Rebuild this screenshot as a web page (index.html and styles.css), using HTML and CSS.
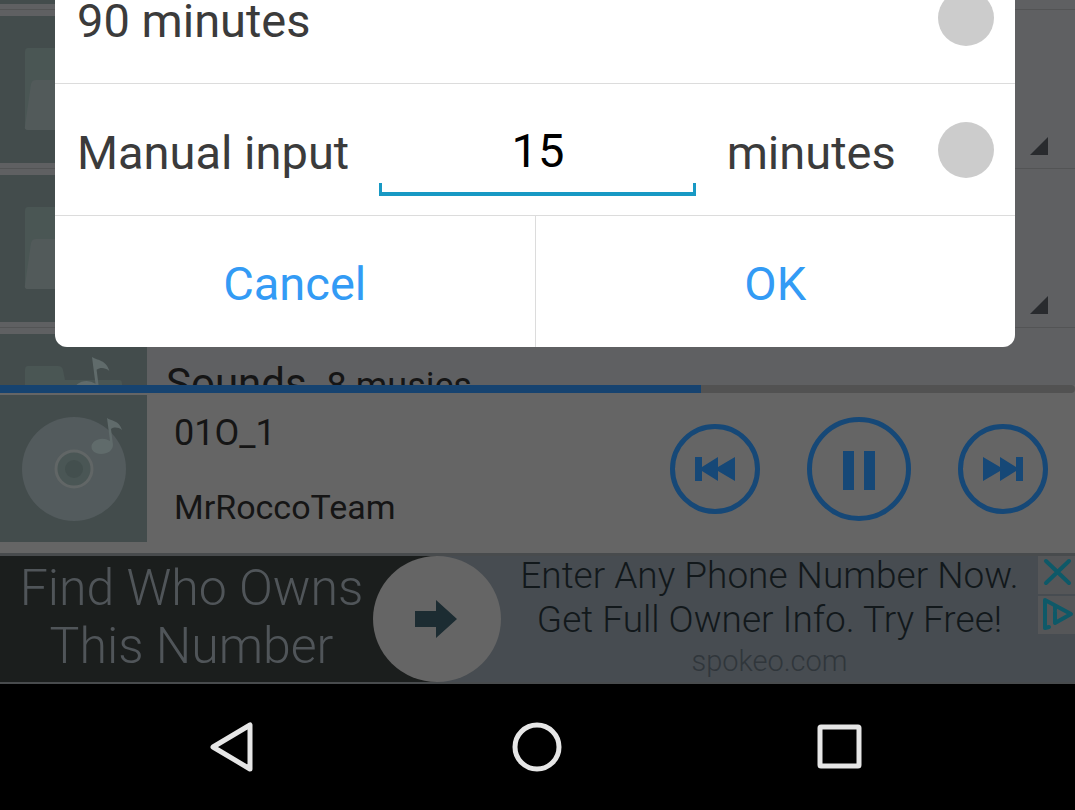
FILE: index.html
```
<!DOCTYPE html>
<html lang="en">
<head>
<meta charset="utf-8">
<meta name="viewport" content="width=device-width, initial-scale=1">
<title>Sleep timer</title>
<link rel="stylesheet" href="styles.css">
</head>
<body>
<svg class="defs" width="0" height="0" aria-hidden="true">
  <symbol id="folder" viewBox="0 0 147 147">
    <path class="folder-back" d="M28 32H58Q62 32 63 36L65 46H119Q122 46 122 50V114H28Q25 114 25 110V36Q25 32 28 32Z"/>
    <path class="folder-front" d="M36 64H126Q129 64 128 68L122 110Q121 114 118 114H28Q24 114 25 110L31 68Q32 64 36 64Z"/>
  </symbol>
  <symbol id="note" viewBox="0 0 32 38">
    <path d="M16 0C20 3 28 2 31 12C27 9 23 9 20 11L22 27C22 32 17 36 10 36C-3 35 -2 23 9 21Q14 20 19 23Z"/>
  </symbol>
</svg>

<main class="screen">
  <section class="library" aria-label="Folders">
    <ul class="rows">
      <li class="row"><svg class="thumb" viewBox="0 0 147 147"><use href="#folder"/></svg></li>
      <li class="row"><svg class="thumb" viewBox="0 0 147 147"><use href="#folder"/></svg><svg class="corner" viewBox="0 0 18 18"><path d="M18 0V18H0Z"/></svg></li>
      <li class="row"><svg class="thumb" viewBox="0 0 147 147"><use href="#folder"/></svg><svg class="corner" viewBox="0 0 18 18"><path d="M18 0V18H0Z"/></svg></li>
      <li class="row">
        <svg class="thumb" viewBox="0 0 147 147"><use href="#folder"/><use class="note" href="#note" x="73" y="23" width="38" height="44"/></svg>
        <div class="folder-label"><span class="folder-name">Sounds</span><span class="folder-count">8 musics</span></div>
      </li>
    </ul>
  </section>

  <section class="player" aria-label="Now playing">
    <div class="progress"><div class="progress-fill" style="width:65.2%"></div></div>
    <div class="player-body">
      <svg class="thumb" viewBox="0 0 147 147">
        <circle class="disc" cx="74" cy="74" r="52"/>
        <circle class="disc-hub" cx="74" cy="74" r="18"/>
        <circle class="disc-hole" cx="74" cy="74" r="9"/>
        <use class="note" href="#note" x="91" y="23" width="32" height="38"/>
      </svg>
      <div class="track"><div class="track-title">01O_1</div><div class="track-artist">MrRoccoTeam</div></div>
      <div class="controls">
        <button class="control" aria-label="Previous"><svg width="90" height="90" viewBox="0 0 90 90"><circle cx="45" cy="45" r="42.5"/><path d="M25 33H32V43L48 33V43L65 33V57L48 47V57L32 47V57H25Z"/></svg></button>
        <button class="control" aria-label="Pause"><svg width="104" height="104" viewBox="0 0 104 104"><circle cx="52" cy="52" r="49.5"/><path d="M36 34H47V73H36ZM57 34H68V73H57Z"/></svg></button>
        <button class="control" aria-label="Next"><svg width="90" height="90" viewBox="0 0 90 90"><circle cx="45" cy="45" r="42.5"/><path d="M65 33H58V43L42 33V43L25 33V57L42 47V57L58 47V57H65Z"/></svg></button>
      </div>
    </div>
  </section>

  <aside class="ad">
    <div class="ad-title">Find Who Owns<br>This Number</div>
    <button class="ad-go" aria-label="Open advertisement"><svg width="44" height="38" viewBox="0 0 44 38"><path d="M0 11H21V0L42 19L21 38V27H0Z"/></svg></button>
    <div class="ad-copy"><p>Enter Any Phone Number Now.<br>Get Full Owner Info. Try Free!</p><a class="ad-link" href="#">spokeo.com</a></div>
    <div class="ad-tools">
      <button class="ad-tool" aria-label="Close advertisement"><svg width="37" height="38" viewBox="0 0 37 38"><path d="M8 5L31 27M31 5L8 27"/></svg></button>
      <button class="ad-tool" aria-label="About this advertisement"><svg width="37" height="38" viewBox="0 0 37 38"><path d="M11 31L7 32V4L33 18L17 27V16M17 11V14"/></svg></button>
    </div>
  </aside>

  <form class="dialog" role="dialog" aria-label="Sleep timer">
    <div class="option">
      <label class="option-label" for="ninety">90 minutes</label>
      <input class="radio" id="ninety" type="radio" name="time">
    </div>
    <div class="option">
      <label class="option-label" for="amount">Manual input</label>
      <div class="field"><input class="amount" id="amount" type="text" inputmode="numeric" value="15"></div>
      <label class="option-label" for="manual">minutes</label>
      <input class="radio" id="manual" type="radio" name="time">
    </div>
    <div class="actions">
      <button class="action" type="button">Cancel</button>
      <button class="action" type="button">OK</button>
    </div>
  </form>
</main>

<nav class="system-nav" aria-label="System">
  <button class="nav-button" aria-label="Back"><svg width="50" height="50" viewBox="0 0 50 50"><path d="M42 3V47L5 25Z"/></svg></button>
  <button class="nav-button" aria-label="Home"><svg width="50" height="50" viewBox="0 0 50 50"><circle cx="25" cy="25" r="22"/></svg></button>
  <button class="nav-button" aria-label="Recent apps"><svg width="50" height="50" viewBox="0 0 50 50"><rect x="5" y="5" width="39" height="39" rx="1"/></svg></button>
</nav>
</body>
</html>
```
FILE: styles.css
```
* { box-sizing: border-box; }
body {
  margin: 0;
  min-height: 100vh;
  display: flex;
  flex-direction: column;
  overflow-x: hidden;
  background: #000;
  font-family: Roboto, "Liberation Sans", sans-serif;
}
button { border: 0; padding: 0; background: none; font: inherit; color: inherit; cursor: pointer; }
svg { display: block; flex: none; }
.defs { position: absolute; }

.screen { position: relative; flex: 1; display: flex; flex-direction: column; background: #656565; }

/* Folder list */
.library { flex: 1 0 0; min-height: 0; overflow: hidden; background: #5f6062; }
.rows { list-style: none; margin: -149px 0 0; padding: 0; }
.row {
  display: flex;
  justify-content: space-between;
  padding: 6px 0 5px;
  border-bottom: 1px solid #535455;
}
.thumb { width: 147px; height: 147px; background: #434c4c; }
.folder-back { fill: #4a5654; }
.folder-front { fill: #525a5a; }
.note { fill: #606b6b; }
.corner { width: 18px; height: 18px; margin: 121px 27px 0 0; fill: #292b2e; }
.folder-label {
  flex: 1;
  display: flex;
  align-items: baseline;
  gap: 20px;
  padding: 26px 0 0 19px;
  color: #151515;
}
.folder-name { font-size: 42px; line-height: 48px; }
.folder-count { font-size: 36px; }

/* Player */
.player { color: #151515; }
.progress { height: 8px; background: #525252; border-radius: 0 4px 4px 0; }
.progress-fill { height: 100%; background: #164370; }
.player-body { display: flex; align-items: center; padding: 2px 27px 10px 0; }
.player .thumb { margin-bottom: 1px; }
.disc { fill: #535b5d; }
.disc-hub { fill: #4a5655; stroke: #616666; stroke-width: 3px; }
.disc-hole { fill: #434f4e; }
.track {
  flex: 1;
  display: flex;
  flex-direction: column;
  gap: 32px;
  padding: 2px 0 0 27px;
  line-height: 42px;
}
.track-title { font-size: 36px; }
.track-artist { font-size: 34px; }
.controls { display: flex; align-items: center; gap: 47px; }
.control circle { fill: none; stroke: #164877; stroke-width: 5px; }
.control path { fill: #164877; }

/* Advertisement */
.ad {
  display: flex;
  border-top: 3px solid #484b4d;
  border-bottom: 2px solid #484b4d;
  background: linear-gradient(90deg, #1b1e1d 437px, #474c51 437px);
}
.ad-title {
  width: 373px;
  padding: 3px 0 7px 10px;
  text-align: center;
  font-size: 50px;
  font-weight: 300;
  line-height: 58px;
  color: #505559;
}
.ad-go {
  flex: none;
  width: 128px;
  height: 126px;
  display: grid;
  place-items: center;
  border-radius: 50%;
  background: #656565;
}
.ad-go path { fill: #1c2c32; }
.ad-copy { flex: 1; margin-top: -2px; text-align: center; font-weight: 300; }
.ad-copy p { margin: 0; font-size: 37px; line-height: 44px; white-space: nowrap; color: #12181b; }
.ad-link { font-size: 29px; line-height: 38px; color: #30363b; text-decoration: none; }
.ad-tools { display: flex; flex-direction: column; align-items: flex-start; gap: 2px; }
.ad-tool { background: #555658; }
.ad-tool path { fill: none; stroke: #0e5968; stroke-width: 4px; stroke-linecap: round; stroke-linejoin: round; }

/* Timer dialog */
.dialog {
  position: absolute;
  top: -48px;
  left: 55px;
  right: 60px;
  overflow: hidden;
  border-radius: 12px;
  background: #fff;
}
.option {
  display: flex;
  align-items: center;
  justify-content: space-between;
  height: 132px;
  padding: 0 21px 0 22px;
  border-bottom: 1px solid #dcdcdc;
}
.option-label { font-size: 47px; line-height: 56px; color: #3b3b3b; white-space: nowrap; padding-top: 6px; }
.radio {
  appearance: none;
  flex: none;
  width: 56px;
  height: 56px;
  margin: 0 0 0 12px;
  border-radius: 50%;
  background: #ccc;
}
.radio:checked { background: #339bf5; }
.field {
  flex: 0 1 317px;
  min-width: 0;
  align-self: flex-end;
  margin-bottom: 19px;
  padding-bottom: 3px;
  background: linear-gradient(#1899c4, #1899c4) left bottom / 3px 9px no-repeat,
    linear-gradient(#1899c4, #1899c4) right bottom / 3px 9px no-repeat;
  border-bottom: 4px solid #1899c4;
}
.amount {
  display: block;
  width: 100%;
  height: 78px;
  border: 0;
  outline: 0;
  padding: 0;
  background: none;
  text-align: center;
  font: 47px Roboto, "Liberation Sans", sans-serif;
  color: #000;
}
.actions { display: flex; height: 131px; }
.action { flex: 1; padding-top: 4px; font-size: 47px; color: #339bf5; }
.action + .action { border-left: 1px solid #dcdcdc; }

/* System navigation */
.system-nav { display: flex; justify-content: space-between; padding: 38px 210px 38px 208px; background: #000; }
.nav-button svg { fill: none; stroke: #e6e6e6; stroke-width: 5px; stroke-linejoin: round; }
```
